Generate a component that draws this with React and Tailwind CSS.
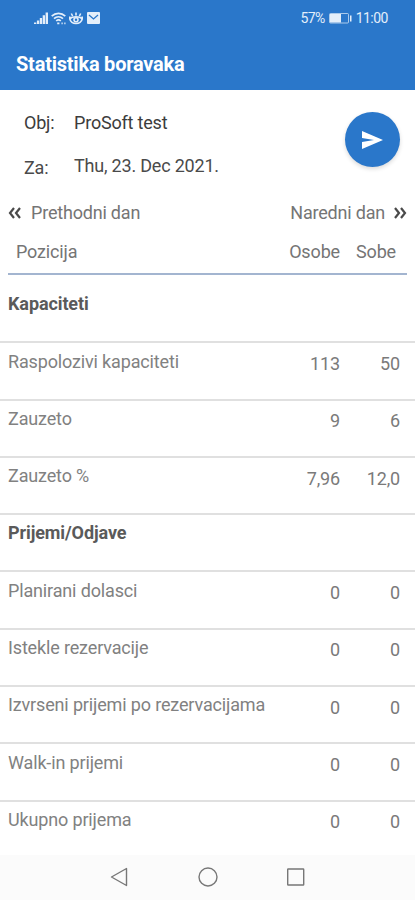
import React from 'react'

const rows = [
  { label: 'Kapaciteti', section: true },
  { label: 'Raspolozivi kapaciteti', osobe: '113', sobe: '50' },
  { label: 'Zauzeto', osobe: '9', sobe: '6' },
  { label: 'Zauzeto %', osobe: '7,96', sobe: '12,0' },
  { label: 'Prijemi/Odjave', section: true },
  { label: 'Planirani dolasci', osobe: '0', sobe: '0' },
  { label: 'Istekle rezervacije', osobe: '0', sobe: '0' },
  { label: 'Izvrseni prijemi po rezervacijama', osobe: '0', sobe: '0' },
  { label: 'Walk-in prijemi', osobe: '0', sobe: '0' },
  { label: 'Ukupno prijema', osobe: '0', sobe: '0' },
]

function StatusBar() {
  return (
    <div className="flex h-9 items-center justify-between pl-[34px] pr-[27px] text-[#e3eefa]">
      <div className="flex items-center gap-[3px]">
        {/* signal */}
        <svg width="14" height="13" viewBox="0 0 14 13" fill="currentColor">
          <path d="M0 10.5h2.300V12H0zM2.900 8.500h2.300V12H2.900zM5.800 6h2.300v6H5.800zM8.700 3.200H11V12H8.700zM11.600.5H14V12h-2.400z" />
        </svg>
        {/* wifi */}
        <svg width="15" height="13" viewBox="0 0 15 13" fill="none" stroke="currentColor" strokeWidth="1.7">
          <path d="M.7 4.200C4.600.400 10.400.400 14.300 4.200M3 6.700c2.600-2.500 6.400-2.500 9 0M5.200 9c1.400-1.300 3.200-1.300 4.600 0" />
          <path d="M6.200 11.300h2.200M10.500 11.300h1.200M13.300 11.300h1.200" />
        </svg>
        {/* eye comfort */}
        <svg width="14" height="13" viewBox="0 0 14 13" fill="none" stroke="currentColor" strokeWidth="1.600">
          <path d="M7 .5v3M2.300 1.500l1.300 2.500M11.700 1.500l-1.300 2.500M.8 4.500v2.500c.8 3 3 4.500 6.200 4.500s5.400-1.500 6.200-4.500V4.500M1 6.700c2.200-2.600 9.800-2.600 12 0" />
          <circle cx="7" cy="7.700" r="2" />
        </svg>
        {/* mail */}
        <svg className="ml-px" width="13" height="12" viewBox="0 0 13 12">
          <rect width="13" height="12" rx="1" fill="currentColor" />
          <path d="M2 3l4.500 4L11 3" fill="none" stroke="#2a77ca" strokeWidth="1.300" />
        </svg>
      </div>
      <div className="flex items-center text-[14px] leading-none">
        <span className="tracking-[-0.6px]">57%</span>
        <svg className="ml-[4px] mr-[4px]" width="23" height="11" viewBox="0 0 23 11">
          <rect x=".5" y=".5" width="19" height="9.500" rx="1" fill="none" stroke="currentColor" opacity=".7" />
          <rect x="1" y="1" width="11" height="8.500" fill="currentColor" />
          <path d="M21 2.500h1.500v6H21z" fill="currentColor" />
        </svg>
        <span className="tracking-[-0.5px]">11:00</span>
      </div>
    </div>
  )
}

function Row({ label, osobe, sobe, section, last }) {
  return (
    <div
      className={`flex h-[57.3px] shrink-0 px-2 text-[18px] leading-5 tracking-[-0.15px] ${last ? '' : 'border-b-2 border-[#e0e0e0]'}`}
    >
      <div
        className={`flex-1 whitespace-nowrap pt-[8.3px] ${section ? 'font-bold tracking-[-0.1px] text-[#5a5a5a]' : 'text-[#818181]'}`}
      >
        {label}
      </div>
      {!section && (
        <>
          <div className="w-[60px] pt-[10.7px] text-right text-[#7a7a7a]">{osobe}</div>
          <div className="w-[67px] pt-[10.7px] pr-[7px] text-right text-[#7a7a7a]">{sobe}</div>
        </>
      )}
    </div>
  )
}

export default function App() {
  return (
    <div className="flex h-[900px] w-[415px] flex-col overflow-hidden bg-white font-[Roboto,sans-serif]">
      <header className="h-[90px] shrink-0 bg-[#2a77ca]">
        <StatusBar />
        <h1 className="pl-4 pt-4 text-[20px] font-bold leading-6 tracking-[-0.22px] text-white">Statistika boravaka</h1>
      </header>

      <section className="flex h-[110px] shrink-0 justify-between pl-6 pr-[15px] text-[18px] leading-5 tracking-[-0.2px]">
        <div className="grid grid-cols-[50px_auto] content-start">
          <span className="pt-[23px] text-[#3c3c3c]">Obj:</span>
          <span className="pt-[23px] text-[#3c3c3c]">ProSoft test</span>
          <span className="pt-[25px] text-[#4a4a4a]">Za:</span>
          <span className="pt-[23px] text-[#4a4a4a]">Thu, 23. Dec 2021.</span>
        </div>
        <button className="mt-[22px] flex size-[55px] items-center justify-center rounded-full bg-[#2a77ca] shadow-[0_2px_4px_rgba(0,0,0,0.15)]">
          <svg width="21" height="18" viewBox="0 0 21 18" fill="#fff">
            <path d="M0 0l21 9L0 18v-7l12-2L0 7z" />
          </svg>
        </button>
      </section>

      <nav className="flex h-[26px] shrink-0 items-center justify-between px-2 text-[18px] leading-5 text-[#757575]">
        <button className="flex items-center gap-[10px] tracking-[-0.2px]">
          <svg width="13" height="12" viewBox="0 0 13 12" fill="none" stroke="#4a4a4a" strokeWidth="2.200">
            <path d="M6 1L2 6l4 5M12 1L8 6l4 5" />
          </svg>
          Prethodni dan
        </button>
        <button className="flex items-center gap-[9px] tracking-[-0.2px]">
          Naredni dan
          <svg width="13" height="12" viewBox="0 0 13 12" fill="none" stroke="#4a4a4a" strokeWidth="2.200">
            <path d="M1 1l4 5-4 5M7 1l4 5-4 5" />
          </svg>
        </button>
      </nav>

      <div className="mx-2 flex h-[49px] shrink-0 border-b-2 border-[#a3b5d0] pt-4 pl-2 pr-[11px] text-[18px] leading-5 tracking-[-0.15px] text-[#757575]">
        <span className="flex-1">Pozicija</span>
        <span>Osobe</span>
        <span className="ml-4">Sobe</span>
      </div>

      <main className="flex min-h-0 flex-1 flex-col overflow-hidden pt-[11px]">
        {rows.map((row, i) => (
          <Row key={row.label} {...row} last={i === rows.length - 1} />
        ))}
      </main>

      <footer className="flex h-[45px] shrink-0 items-center bg-[#fbfbfb] pb-px pl-[110px]">
        <svg width="196" height="20" viewBox="0 0 196 20" fill="none" stroke="#777" strokeWidth="1.400">
          <path d="M16.500 1.500v17L1.500 10z" strokeLinejoin="round" />
          <circle cx="98" cy="10" r="9" />
          <rect x="177.700" y="2" width="16" height="16" rx=".5" />
        </svg>
      </footer>
    </div>
  )
}
